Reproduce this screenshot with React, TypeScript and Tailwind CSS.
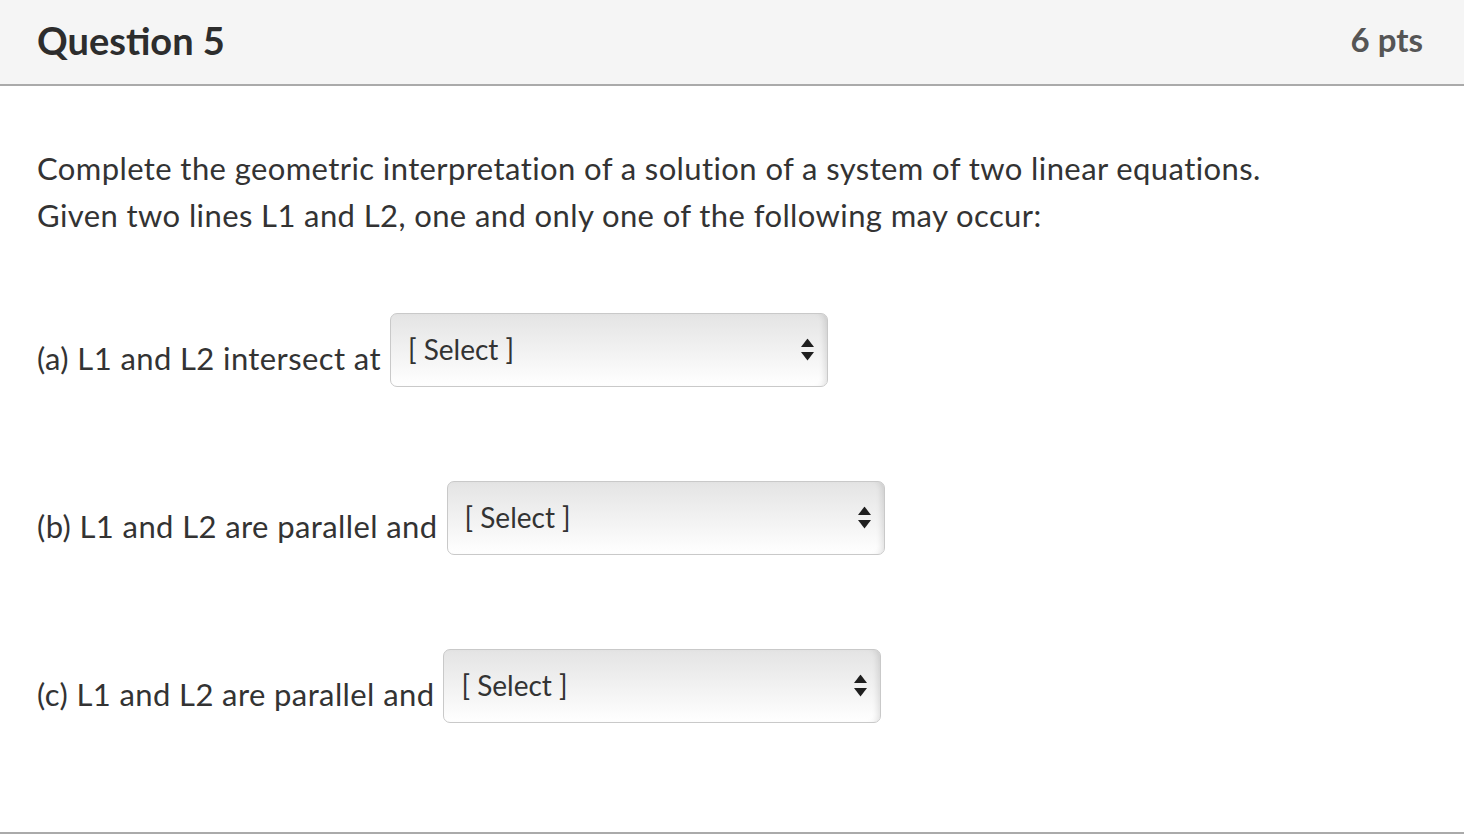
const rows = [
  { label: '(a) L1 and L2 intersect at' },
  { label: '(b) L1 and L2 are parallel and' },
  { label: '(c) L1 and L2 are parallel and' },
];

const SelectBox = () => (
  <div className="relative flex h-[74px] w-[438px] items-center rounded-[7px] border border-[#c9c9c9] bg-gradient-to-b from-[#e4e4e4] to-[#ffffff] pl-[17px] shadow-[inset_-6px_0_6px_-4px_rgba(0,0,0,0.12)]">
    <span className="-mt-[2px] text-[28px] leading-none text-[#333333]">[ Select ]</span>
    <svg
      className="absolute right-[13px] top-1/2 -translate-y-1/2"
      width="13"
      height="23"
      viewBox="0 0 13 23"
    >
      <path d="M6.5 0 L13 8.5 L0 8.5 Z" fill="#1f1f1f" />
      <path d="M0 13.5 L13 13.5 L6.5 22 Z" fill="#1f1f1f" />
    </svg>
  </div>
);

export default function App() {
  return (
    <div
      className="min-h-[834px] w-full bg-white text-[#333333]"
      style={{ fontFamily: 'Lato, "Open Sans", sans-serif' }}
    >
      <div className="flex h-[86px] items-center justify-between border-b-2 border-[#aaaaaa] bg-[#f5f5f5] px-[37px] pb-[4px]">
        <h2 className="text-[38px] font-bold text-[#2d2d2d]">Question 5</h2>
        <span className="pr-[4px] text-[33px] font-bold text-[#555555]">6 pts</span>
      </div>

      <div className="border-b-2 border-[#aaaaaa] px-[37px] pt-[59px] pb-[109px]">
        <p className="text-[31px] leading-[47px] tracking-[0.4px]">
          Complete the geometric interpretation of a solution of a system of two linear equations.
          <br />
          Given two lines L1 and L2, one and only one of the following may occur:
        </p>

        <div className="mt-[74px] flex flex-col gap-[94px]">
          {rows.map((row) => (
            <div key={row.label} className="flex items-center gap-[9px]">
              <span className="pt-[16px] text-[31px] leading-[47px] tracking-[0.4px]">{row.label}</span>
              <SelectBox />
            </div>
          ))}
        </div>
      </div>
    </div>
  );
}
